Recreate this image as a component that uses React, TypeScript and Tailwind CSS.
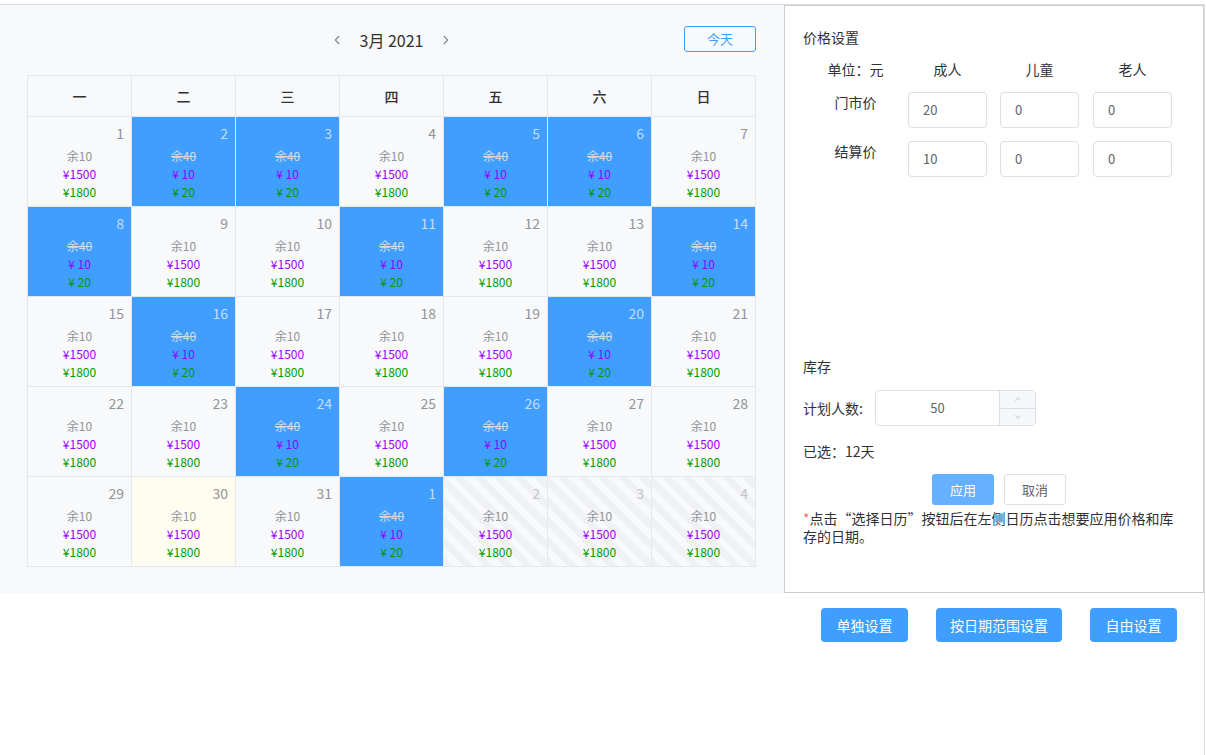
import { ChevronLeft, ChevronRight, ChevronUp, ChevronDown } from "lucide-react";

const weekdays = ["一", "二", "三", "四", "五", "六", "日"];
const picked = new Set([2, 3, 5, 6, 8, 11, 14, 16, 20, 24, 26]);

type Kind = "normal" | "blue" | "today" | "next";
type Cell = { day: number; kind: Kind };

const cells: Cell[] = [];
for (let d = 1; d <= 31; d++) {
  cells.push({ day: d, kind: picked.has(d) ? "blue" : d === 30 ? "today" : "normal" });
}
cells.push({ day: 1, kind: "blue" });
[2, 3, 4].forEach((d) => cells.push({ day: d, kind: "next" }));

function DayCell({ cell }: { cell: Cell }) {
  const blue = cell.kind === "blue";
  const bg =
    cell.kind === "blue"
      ? "bg-[#409eff]"
      : cell.kind === "today"
        ? "bg-[#fffdf0]"
        : cell.kind === "next"
          ? "bg-[repeating-linear-gradient(45deg,#f0f1f4_0px,#f0f1f4_7px,#f8f9fb_7px,#f8f9fb_14px)]"
          : "";
  const numColor = blue ? "text-[#c6dcff]" : cell.kind === "next" ? "text-[#c0c4cc]" : "text-[#909399]";

  return (
    <div className={`h-[90px] border-r border-b border-[#e4e7ed] pt-[6px] ${bg}`}>
      <div className={`pr-[7px] text-right text-[14px] leading-[20px] ${numColor}`}>{cell.day}</div>
      <div className="mt-[4px] flex flex-col items-center text-[12px] leading-[18px]">
        {blue ? (
          <>
            <span className="text-[#d3dbe8] line-through">余40</span>
            <span className="text-[#9900ff]">¥ 10</span>
            <span className="text-[#009a00]">¥ 20</span>
          </>
        ) : (
          <>
            <span className="text-[#909399]">余10</span>
            <span className="text-[#9900ff]">¥1500</span>
            <span className="text-[#009a00]">¥1800</span>
          </>
        )}
      </div>
    </div>
  );
}

function PriceInput({ value }: { value: string }) {
  return (
    <div className="flex h-[36px] w-[79px] items-center rounded-[4px] border border-[#dcdfe6] bg-white px-[14px] text-[13px] text-[#606266]">
      {value}
    </div>
  );
}

export default function App() {
  return (
    <div className="mt-[4px] h-[751px] w-[1205px] border-t border-r border-[#dddddd] bg-white font-['Noto_Sans_CJK_SC',sans-serif] text-[#303133]">
      <div className="flex">
        {/* calendar side */}
        <div className="h-[588px] w-[784px] bg-[#f8f9fb] px-[27px] pt-[21px]">
          <div className="relative flex h-[26px] w-[729px] items-center justify-center">
            <div className="flex items-center gap-[16px] pt-[2px]">
              <ChevronLeft className="h-[14px] w-[14px] text-[#909399]" strokeWidth={2.5} />
              <span className="text-[16px] text-[#303133]">3月 2021</span>
              <ChevronRight className="h-[14px] w-[14px] text-[#909399]" strokeWidth={2.5} />
            </div>
            <button className="absolute right-0 top-0 h-[26px] w-[72px] rounded-[3px] border border-[#409eff] text-[13px] text-[#409eff]">
              今天
            </button>
          </div>

          <div className="mt-[23px] grid w-[729px] grid-cols-7 border-t border-l border-[#e4e7ed]">
            {weekdays.map((w) => (
              <div
                key={w}
                className="flex h-[41px] items-center justify-center border-r border-b border-[#e4e7ed] text-[14px] font-medium text-[#303133]"
              >
                {w}
              </div>
            ))}
            {cells.map((c, i) => (
              <DayCell key={i} cell={c} />
            ))}
          </div>
        </div>

        {/* settings panel */}
        <div className="h-[588px] w-[420px] border border-[#cccccc] bg-white pl-[18px] pr-[18px] pt-[21px] text-[14px] text-[#303133]">
          <div className="leading-[20px]">价格设置</div>

          <div className="mt-[12px] flex leading-[20px]">
            <div className="w-[105px] text-center">单位：元</div>
            <div className="w-[79px] text-center">成人</div>
            <div className="ml-[13px] w-[79px] text-center">儿童</div>
            <div className="ml-[14px] w-[79px] text-center">老人</div>
          </div>

          <div className="mt-[13px] flex items-start">
            <div className="w-[105px] text-center leading-[20px]">门市价</div>
            <PriceInput value="20" />
            <div className="ml-[13px]">
              <PriceInput value="0" />
            </div>
            <div className="ml-[14px]">
              <PriceInput value="0" />
            </div>
          </div>

          <div className="mt-[13px] flex items-start">
            <div className="w-[105px] text-center leading-[20px]">结算价</div>
            <PriceInput value="10" />
            <div className="ml-[13px]">
              <PriceInput value="0" />
            </div>
            <div className="ml-[14px]">
              <PriceInput value="0" />
            </div>
          </div>

          <div className="mt-[179px] leading-[20px]">库存</div>

          <div className="mt-[14px] flex items-center">
            <span className="w-[72px] leading-[20px]">计划人数:</span>
            <div className="flex h-[36px] w-[161px] rounded-[4px] border border-[#dcdfe6]">
              <div className="flex flex-1 items-center justify-center text-[13px] text-[#606266]">50</div>
              <div className="flex w-[36px] flex-col border-l border-[#dcdfe6] bg-[#f5f7fa]">
                <div className="flex flex-1 items-center justify-center border-b border-[#dcdfe6]">
                  <ChevronUp className="h-[10px] w-[10px] text-[#b0b4bc]" />
                </div>
                <div className="flex flex-1 items-center justify-center">
                  <ChevronDown className="h-[10px] w-[10px] text-[#b0b4bc]" />
                </div>
              </div>
            </div>
          </div>

          <div className="mt-[15px] leading-[20px]">已选：12天</div>

          <div className="mt-[13px] flex justify-center gap-[10px] pl-[10px]">
            <button className="h-[31px] w-[62px] rounded-[3px] bg-[#66b1ff] text-[13px] text-white">应用</button>
            <button className="h-[31px] w-[62px] rounded-[3px] border border-[#dcdfe6] bg-white text-[13px] text-[#606266]">
              取消
            </button>
          </div>

          <p className="mt-[4px] w-[381px] text-[14px] leading-[18px] text-[#303133]">
            <span className="text-[#f56c6c]">*</span>点击“选择日历”按钮后在左侧日历点击想要应用价格和库存的日期。
          </p>
        </div>
      </div>

      <div className="flex justify-end gap-[28px] pr-[27px] pt-[15px]">
        <button className="h-[34px] w-[87px] rounded-[4px] bg-[#409eff] text-[14px] text-white">单独设置</button>
        <button className="h-[34px] w-[126px] rounded-[4px] bg-[#409eff] text-[14px] text-white">按日期范围设置</button>
        <button className="h-[34px] w-[87px] rounded-[4px] bg-[#409eff] text-[14px] text-white">自由设置</button>
      </div>
    </div>
  );
}
